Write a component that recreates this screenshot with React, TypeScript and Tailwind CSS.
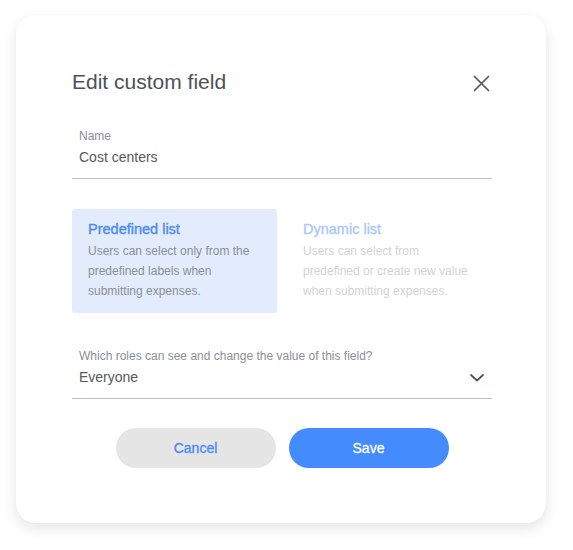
import React from "react";

export default function App() {
  const font = { fontFamily: '"Liberation Sans", Arial, sans-serif' };
  return (
    <div className="w-[573px] h-[550px] bg-white overflow-hidden" style={font}>
      <div className="ml-[16px] mt-[15px] w-[530px] h-[508px] bg-white rounded-[20px] shadow-[0_5px_14px_rgba(0,0,0,0.11)] pt-[53px] pl-[56px] pr-[54px]">
        <div className="flex items-center justify-between h-[28px]">
          <h1 className="text-[21px] leading-[28px] text-[#4d5156]">Edit custom field</h1>
          <button className="w-[20px] h-[20px] mt-[4px] flex items-center justify-center">
            <svg width="20" height="20" viewBox="0 0 20 20" fill="none">
              <path d="M2.5 2.5L16.5 16.5M16.5 2.5L2.5 16.5" stroke="#55595e" strokeWidth="1.7" strokeLinecap="round" />
            </svg>
          </button>
        </div>

        <div className="mt-[32px] border-b border-[#b7bfcc] pl-[7px] pb-[11px]">
          <div className="text-[12px] leading-[16px] text-[#8c8f94]">Name</div>
          <div className="mt-[3px] text-[14px] leading-[20px] text-[#55595e]">Cost centers</div>
        </div>

        <div className="mt-[30px] grid grid-cols-2 gap-[10px]">
          <div className="h-[104px] rounded-[3px] bg-[#e3ecfc] pt-[10px] px-[16px]">
            <div className="text-[14.5px] leading-[20px] text-[#4a8af4] [-webkit-text-stroke:0.35px_#4a8af4]">Predefined list</div>
            <div className="mt-[2px] text-[12px] leading-[20px] text-[#8a8f96]">
              Users can select only from the predefined labels when submitting expenses.
            </div>
          </div>
          <div className="h-[104px] rounded-[3px] pt-[10px] px-[16px]">
            <div className="text-[14.5px] leading-[20px] text-[#aac9fb] [-webkit-text-stroke:0.35px_#aac9fb]">Dynamic list</div>
            <div className="mt-[2px] text-[12px] leading-[20px] text-[#d2d3d5]">
              Users can select from predefined or create new value when submitting expenses.
            </div>
          </div>
        </div>

        <div className="mt-[35px] border-b border-[#b7bfcc] pl-[7px] pb-[11px] flex items-end justify-between">
          <div>
            <div className="text-[12px] leading-[16px] text-[#8c8f94]">Which roles can see and change the value of this field?</div>
            <div className="mt-[3px] text-[14px] leading-[20px] text-[#55595e]">Everyone</div>
          </div>
          <svg width="14" height="8" viewBox="0 0 14 8" fill="none" className="mr-[8px] mb-[5px]">
            <path d="M1 1L7 6.5L13 1" stroke="#4d5156" strokeWidth="1.7" strokeLinecap="round" strokeLinejoin="round" />
          </svg>
        </div>

        <div className="mt-[29px] flex justify-center gap-[13px]">
          <button className="w-[160px] h-[40px] rounded-full bg-[#e5e5e5] text-[14px] text-[#4a8af4] [-webkit-text-stroke:0.3px_#4a8af4]">
            Cancel
          </button>
          <button className="w-[160px] h-[40px] rounded-full bg-[#448bfe] text-[14px] text-white [-webkit-text-stroke:0.3px_#ffffff]">
            Save
          </button>
        </div>
      </div>
    </div>
  );
}
